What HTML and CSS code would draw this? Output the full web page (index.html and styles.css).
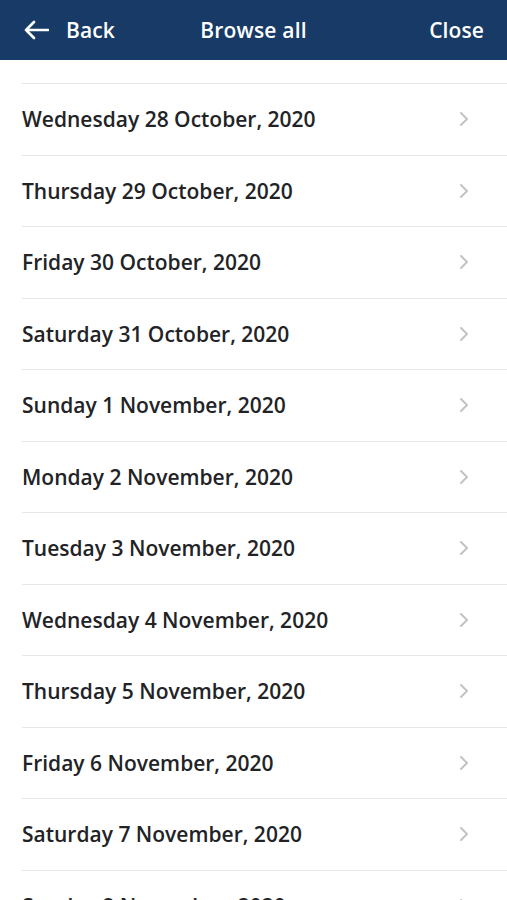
FILE: index.html
```html
<!DOCTYPE html>
<html lang="en">
<head>
<meta charset="utf-8">
<title>Browse all</title>
<link rel="stylesheet" href="styles.css">
</head>
<body>
<header class="topbar">
  <a class="back">
    <svg class="back-icon" width="26" height="20" viewBox="0 0 26 20"><path d="M11 2 L3 10 L11 18 M3 10 H25" fill="none" stroke="#fff" stroke-width="2.6" stroke-linecap="round" stroke-linejoin="round"/></svg>
    <span>Back</span>
  </a>
  <h1 class="title">Browse all</h1>
  <a class="close">Close</a>
</header>
<main class="viewport">
  <ul class="list">
    <li class="row row-partial"></li>
    <li class="row"><span>Wednesday 28 October, 2020</span><svg class="chev" width="10" height="16" viewBox="0 0 10 16"><path d="M2 2 L8 8 L2 14" fill="none" stroke="#c3c3c3" stroke-width="2" stroke-linecap="round" stroke-linejoin="round"/></svg></li>
    <li class="row"><span>Thursday 29 October, 2020</span><svg class="chev" width="10" height="16" viewBox="0 0 10 16"><path d="M2 2 L8 8 L2 14" fill="none" stroke="#c3c3c3" stroke-width="2" stroke-linecap="round" stroke-linejoin="round"/></svg></li>
    <li class="row"><span>Friday 30 October, 2020</span><svg class="chev" width="10" height="16" viewBox="0 0 10 16"><path d="M2 2 L8 8 L2 14" fill="none" stroke="#c3c3c3" stroke-width="2" stroke-linecap="round" stroke-linejoin="round"/></svg></li>
    <li class="row"><span>Saturday 31 October, 2020</span><svg class="chev" width="10" height="16" viewBox="0 0 10 16"><path d="M2 2 L8 8 L2 14" fill="none" stroke="#c3c3c3" stroke-width="2" stroke-linecap="round" stroke-linejoin="round"/></svg></li>
    <li class="row"><span>Sunday 1 November, 2020</span><svg class="chev" width="10" height="16" viewBox="0 0 10 16"><path d="M2 2 L8 8 L2 14" fill="none" stroke="#c3c3c3" stroke-width="2" stroke-linecap="round" stroke-linejoin="round"/></svg></li>
    <li class="row"><span>Monday 2 November, 2020</span><svg class="chev" width="10" height="16" viewBox="0 0 10 16"><path d="M2 2 L8 8 L2 14" fill="none" stroke="#c3c3c3" stroke-width="2" stroke-linecap="round" stroke-linejoin="round"/></svg></li>
    <li class="row"><span>Tuesday 3 November, 2020</span><svg class="chev" width="10" height="16" viewBox="0 0 10 16"><path d="M2 2 L8 8 L2 14" fill="none" stroke="#c3c3c3" stroke-width="2" stroke-linecap="round" stroke-linejoin="round"/></svg></li>
    <li class="row"><span>Wednesday 4 November, 2020</span><svg class="chev" width="10" height="16" viewBox="0 0 10 16"><path d="M2 2 L8 8 L2 14" fill="none" stroke="#c3c3c3" stroke-width="2" stroke-linecap="round" stroke-linejoin="round"/></svg></li>
    <li class="row"><span>Thursday 5 November, 2020</span><svg class="chev" width="10" height="16" viewBox="0 0 10 16"><path d="M2 2 L8 8 L2 14" fill="none" stroke="#c3c3c3" stroke-width="2" stroke-linecap="round" stroke-linejoin="round"/></svg></li>
    <li class="row"><span>Friday 6 November, 2020</span><svg class="chev" width="10" height="16" viewBox="0 0 10 16"><path d="M2 2 L8 8 L2 14" fill="none" stroke="#c3c3c3" stroke-width="2" stroke-linecap="round" stroke-linejoin="round"/></svg></li>
    <li class="row"><span>Saturday 7 November, 2020</span><svg class="chev" width="10" height="16" viewBox="0 0 10 16"><path d="M2 2 L8 8 L2 14" fill="none" stroke="#c3c3c3" stroke-width="2" stroke-linecap="round" stroke-linejoin="round"/></svg></li>
    <li class="row"><span>Sunday 8 November, 2020</span><svg class="chev" width="10" height="16" viewBox="0 0 10 16"><path d="M2 2 L8 8 L2 14" fill="none" stroke="#c3c3c3" stroke-width="2" stroke-linecap="round" stroke-linejoin="round"/></svg></li>
  </ul>
</main>
</body>
</html>
```
FILE: styles.css
```css
* { box-sizing: border-box; }
html, body { margin: 0; padding: 0; }
body {
  width: 507px;
  height: 900px;
  overflow: hidden;
  background: #fff;
  font-family: "Open Sans", "Noto Sans", sans-serif;
}
.topbar {
  height: 60px;
  background: #173a66;
  color: #fff;
  display: grid;
  grid-template-columns: 1fr auto 1fr;
  align-items: center;
  padding: 0 23px 0 23px;
}
.back {
  display: flex;
  align-items: center;
  gap: 17px;
  font-size: 21px;
  font-weight: 600;
  letter-spacing: 0.1px;
}
.back-icon { display: block; }
.title {
  margin: 0;
  font-size: 21px;
  font-weight: 600;
  letter-spacing: 0.2px;
}
.close {
  justify-self: end;
  font-size: 21px;
  font-weight: 600;
  letter-spacing: 0.1px;
}
.viewport {
  height: 840px;
  overflow: hidden;
}
.list {
  list-style: none;
  margin: 0;
  padding: 0;
}
.row {
  height: 71.5px;
  margin-left: 22px;
  padding-right: 38px;
  border-bottom: 1px solid #e6e6e6;
  display: flex;
  align-items: center;
  justify-content: space-between;
  color: #222326;
  font-size: 21px;
  font-weight: 600;
  letter-spacing: 0;
}
.row-partial { height: 24px; }
.chev { display: block; }
```
